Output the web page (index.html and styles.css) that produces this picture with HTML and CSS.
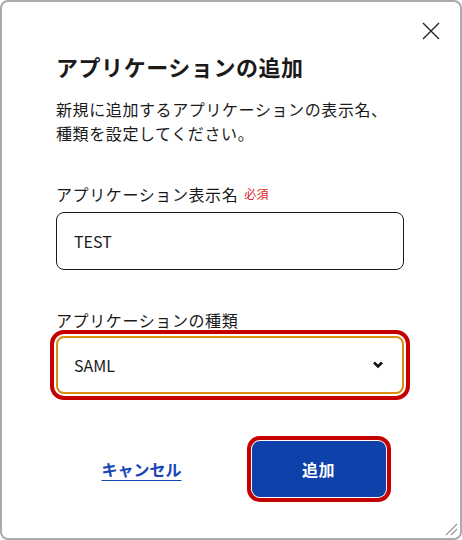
FILE: index.html
```html
<!DOCTYPE html>
<html lang="ja">
<head>
<meta charset="utf-8">
<link rel="stylesheet" href="styles.css">
</head>
<body>
<div class="dialog">
  <button class="close" aria-label="閉じる">
    <svg width="18" height="18" viewBox="0 0 18 18"><path d="M1 1L17 17M17 1L1 17" stroke="#222" stroke-width="1.4" fill="none"/></svg>
  </button>
  <h1 class="title">アプリケーションの追加</h1>
  <p class="desc">新規に追加するアプリケーションの表示名、<br>種類を設定してください。</p>
  <div class="field">
    <label class="label">アプリケーション表示名<span class="req">必須</span></label>
    <div class="input">TEST</div>
  </div>
  <div class="field field2">
    <label class="label">アプリケーションの種類</label>
    <div class="select">
      <span>SAML</span>
      <svg class="chev" width="12" height="8" viewBox="0 0 12 8"><path d="M2 1.5L6 5.5L10 1.5" stroke="#111" stroke-width="2.6" fill="none"/></svg>
    </div>
  </div>
  <div class="actions">
    <div class="cell"><a class="cancel" href="#">キャンセル</a></div>
    <div class="cell"><button class="primary">追加</button></div>
  </div>
  <svg class="grip" width="16" height="16" viewBox="0 0 16 16"><path d="M15 4L4 15M15 9L9 15" stroke="#999" stroke-width="1.2" fill="none"/></svg>
</div>
</body>
</html>
```
FILE: styles.css
```css
html, body { margin: 0; padding: 0; background: #fff; }
body { font-family: "Noto Sans CJK JP", "Noto Sans", sans-serif; color: #1a1a1a; letter-spacing: 0.6px; }
.dialog {
  position: relative;
  box-sizing: border-box;
  width: 462px;
  height: 540px;
  border: 2px solid #ababab;
  border-radius: 8px;
  padding: 48px 56px 0 54px;
}
.close {
  position: absolute;
  top: 17px;
  right: 17px;
  width: 24px;
  height: 24px;
  padding: 3px;
  border: 0;
  background: none;
  line-height: 0;
}
.title {
  margin: 0;
  font-size: 22px;
  line-height: 32px;
  font-weight: 700;
  color: #1a1a1a;
  letter-spacing: 0.55px;
}
.desc {
  margin: 15px 0 0;
  font-size: 16px;
  line-height: 24px;
}
.field { margin-top: 37px; display: flex; flex-direction: column; }
.field2 { margin-top: 38px; }
.label {
  font-size: 16px;
  line-height: 24px;
  display: flex;
  align-items: center;
}
.req { color: #e0262c; font-size: 12px; margin-left: 6px; line-height: 24px; letter-spacing: 0.3px; }
.input {
  margin-top: 6px;
  box-sizing: border-box;
  height: 58px;
  border: 1px solid #1a1a1a;
  border-radius: 8px;
  padding: 0 17px;
  display: flex;
  align-items: center;
  font-size: 16px;
  letter-spacing: 0;
}
.select {
  margin-top: 4px;
  box-sizing: border-box;
  height: 58px;
  border: 2px solid #d8900e;
  border-radius: 8px;
  outline: 4px solid #c40000;
  outline-offset: 2px;
  padding: 0 18px 0 16px;
  display: flex;
  align-items: center;
  justify-content: space-between;
  font-size: 16px;
  letter-spacing: 0;
}
.actions {
  margin-top: 47px;
  margin-left: 2px;
  display: grid;
  grid-template-columns: 1fr 1fr;
  align-items: center;
}
.cell { display: flex; justify-content: center; }
.cancel {
  color: #1646b5;
  font-weight: 700;
  font-size: 16px;
  text-decoration: underline;
  text-underline-offset: 4px;
  margin-left: -6px;
  letter-spacing: 0;
}
.primary {
  width: 134px;
  height: 56px;
  border: 0;
  border-radius: 8px;
  background: #0f41ab;
  color: #fff;
  font-family: inherit;
  font-weight: 700;
  font-size: 16px;
  outline: 4px solid #c40000;
  outline-offset: 1px;
  margin-left: 2px;
  letter-spacing: 0.6px;
}
.grip { position: absolute; right: 2px; bottom: 2px; }
```
